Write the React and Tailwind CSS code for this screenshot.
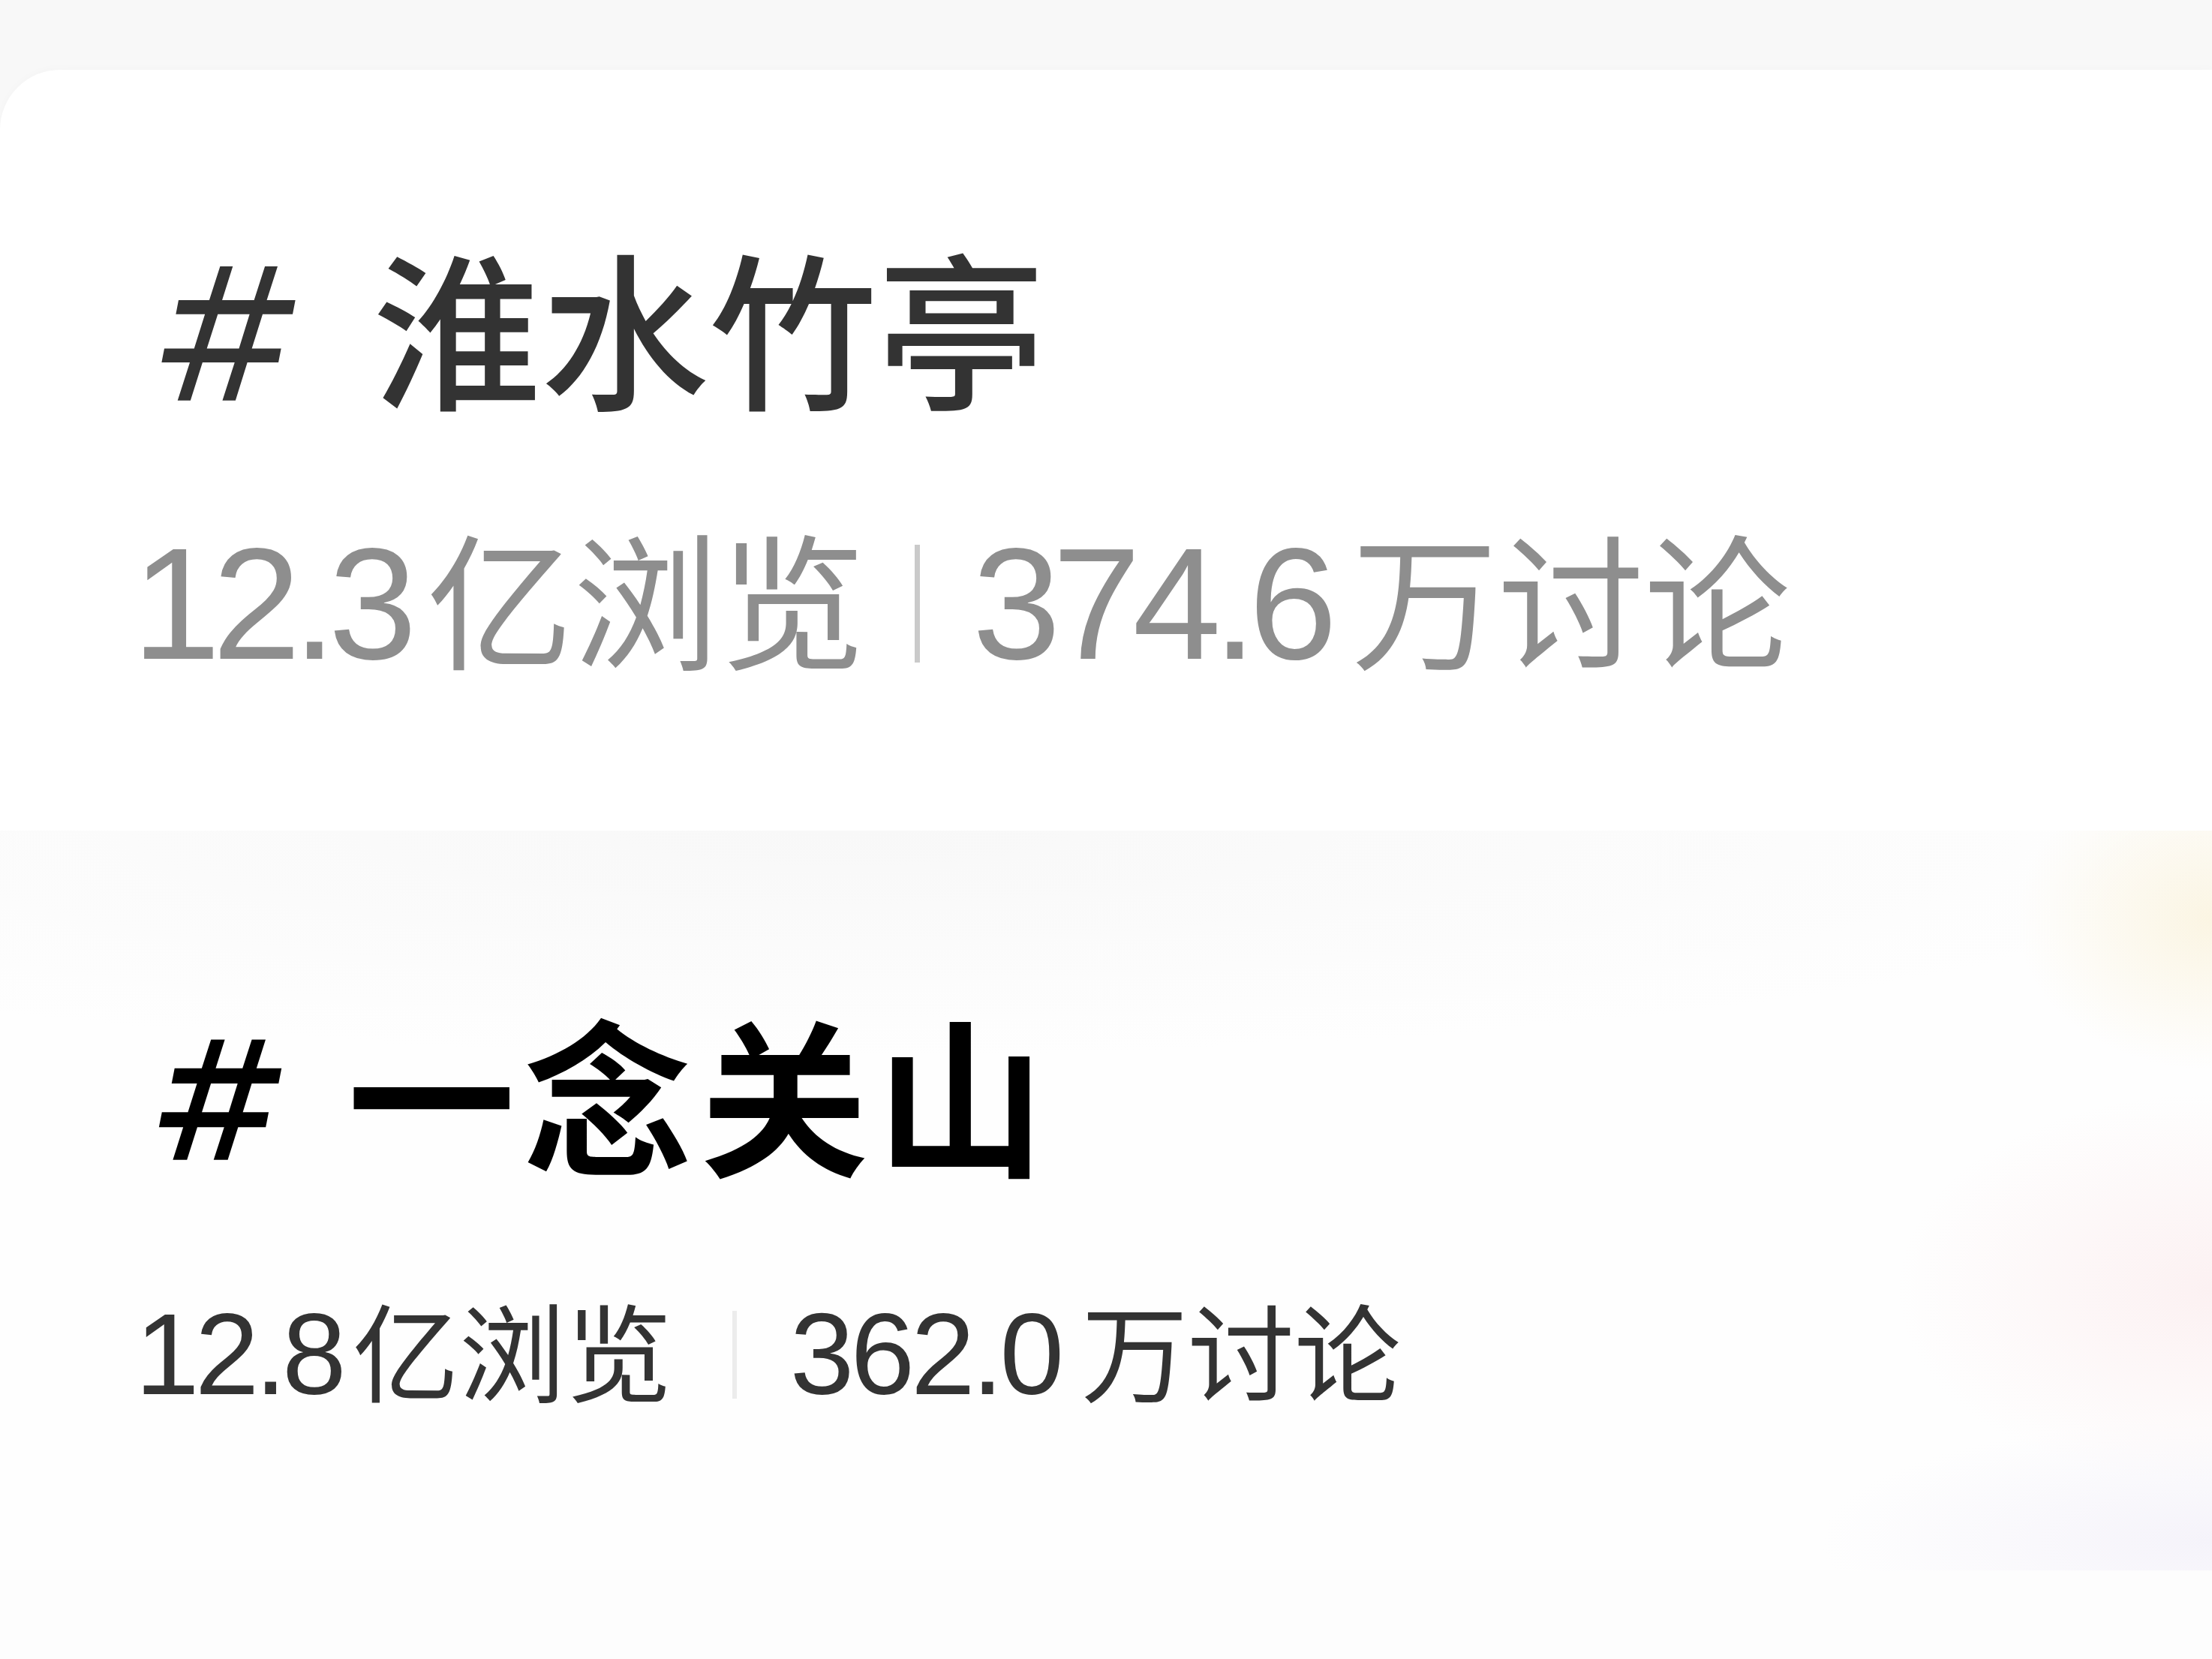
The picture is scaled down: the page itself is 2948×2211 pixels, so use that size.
export default function App() {
  const sans = "font-['Liberation_Sans','Noto_Sans_CJK_SC',sans-serif]";
  const cjk = "font-['Noto_Sans_CJK_SC',sans-serif]";

  return (
    <div className="w-[2948px] h-[2211px] overflow-hidden bg-[#f8f8f8] pt-[93px]">
      <div className="h-full rounded-tl-[80px] bg-white flex flex-col shadow-[0_-2px_12px_rgba(0,0,0,0.02)]">
        {/* first topic */}
        <section className="h-[1014px] shrink-0 pl-[176px] pt-[227px] flex flex-col">
          <h2 className={`${cjk} h-[224px] leading-none font-medium text-[#333333] flex items-center`}>
            <span className="inline-block text-[238px] leading-none -skew-x-11 ml-[11px] mr-[72px]">＃</span>
            <span className="text-[224px] leading-none">淮水竹亭</span>
          </h2>
          <div className={`${sans} h-[195px] mt-[163px] text-[195px] leading-none text-[#8e8e8e] flex items-center`}>
            <span className="leading-none">
              <span className="text-[212px] tracking-[-11px]">12.3</span>
              <span className="ml-[24px]">亿浏览</span>
            </span>
            <span className="w-[7px] h-[157px] bg-[#cacaca] ml-[65px] mr-[70px]" />
            <span className="leading-none">
              <span className="text-[212px] tracking-[-11px]">374.6</span>
              <span className="ml-[30px]">万讨论</span>
            </span>
          </div>
        </section>

        {/* second topic, over a soft blurred backdrop */}
        <section className="h-[986px] shrink-0 pl-[176px] pt-[235px] flex flex-col bg-[radial-gradient(ellipse_260px_200px_at_100%_12%,#fbf5e3_0%,rgba(251,245,227,0)_100%),radial-gradient(ellipse_420px_260px_at_100%_62%,#fcf1f2_0%,rgba(252,241,242,0)_100%),radial-gradient(ellipse_520px_160px_at_100%_96%,#f5f3fa_0%,rgba(245,243,250,0)_100%),radial-gradient(ellipse_1900px_300px_at_38%_0%,#f8f8f8_0%,rgba(250,250,250,0)_100%)] bg-[#fefefe]">
          <h2 className={`${cjk} h-[224px] leading-none font-bold text-black flex items-center`}>
            <span className="inline-block text-[214px] leading-none -skew-x-11 ml-[12px] mr-[61px]">＃</span>
            <span className="text-[224px] leading-none tracking-[11px]">一念关山</span>
          </h2>
          <div className={`${sans} h-[142px] mt-[168px] ml-[4px] text-[142px] leading-none text-[#333333] flex items-center`}>
            <span className="leading-none">
              <span className="text-[154px] tracking-[-6px]">12.8</span>
              <span className="ml-[14px]">亿浏览</span>
            </span>
            <span className="w-[6px] h-[117px] bg-[#ececec] ml-[80px] mr-[71px]" />
            <span className="leading-none">
              <span className="text-[154px] tracking-[-5px]">362.0</span>
              <span className="ml-[28px]">万讨论</span>
            </span>
          </div>
        </section>

        <div className="flex-1 bg-[#fdfdfd]" />
      </div>
    </div>
  );
}
